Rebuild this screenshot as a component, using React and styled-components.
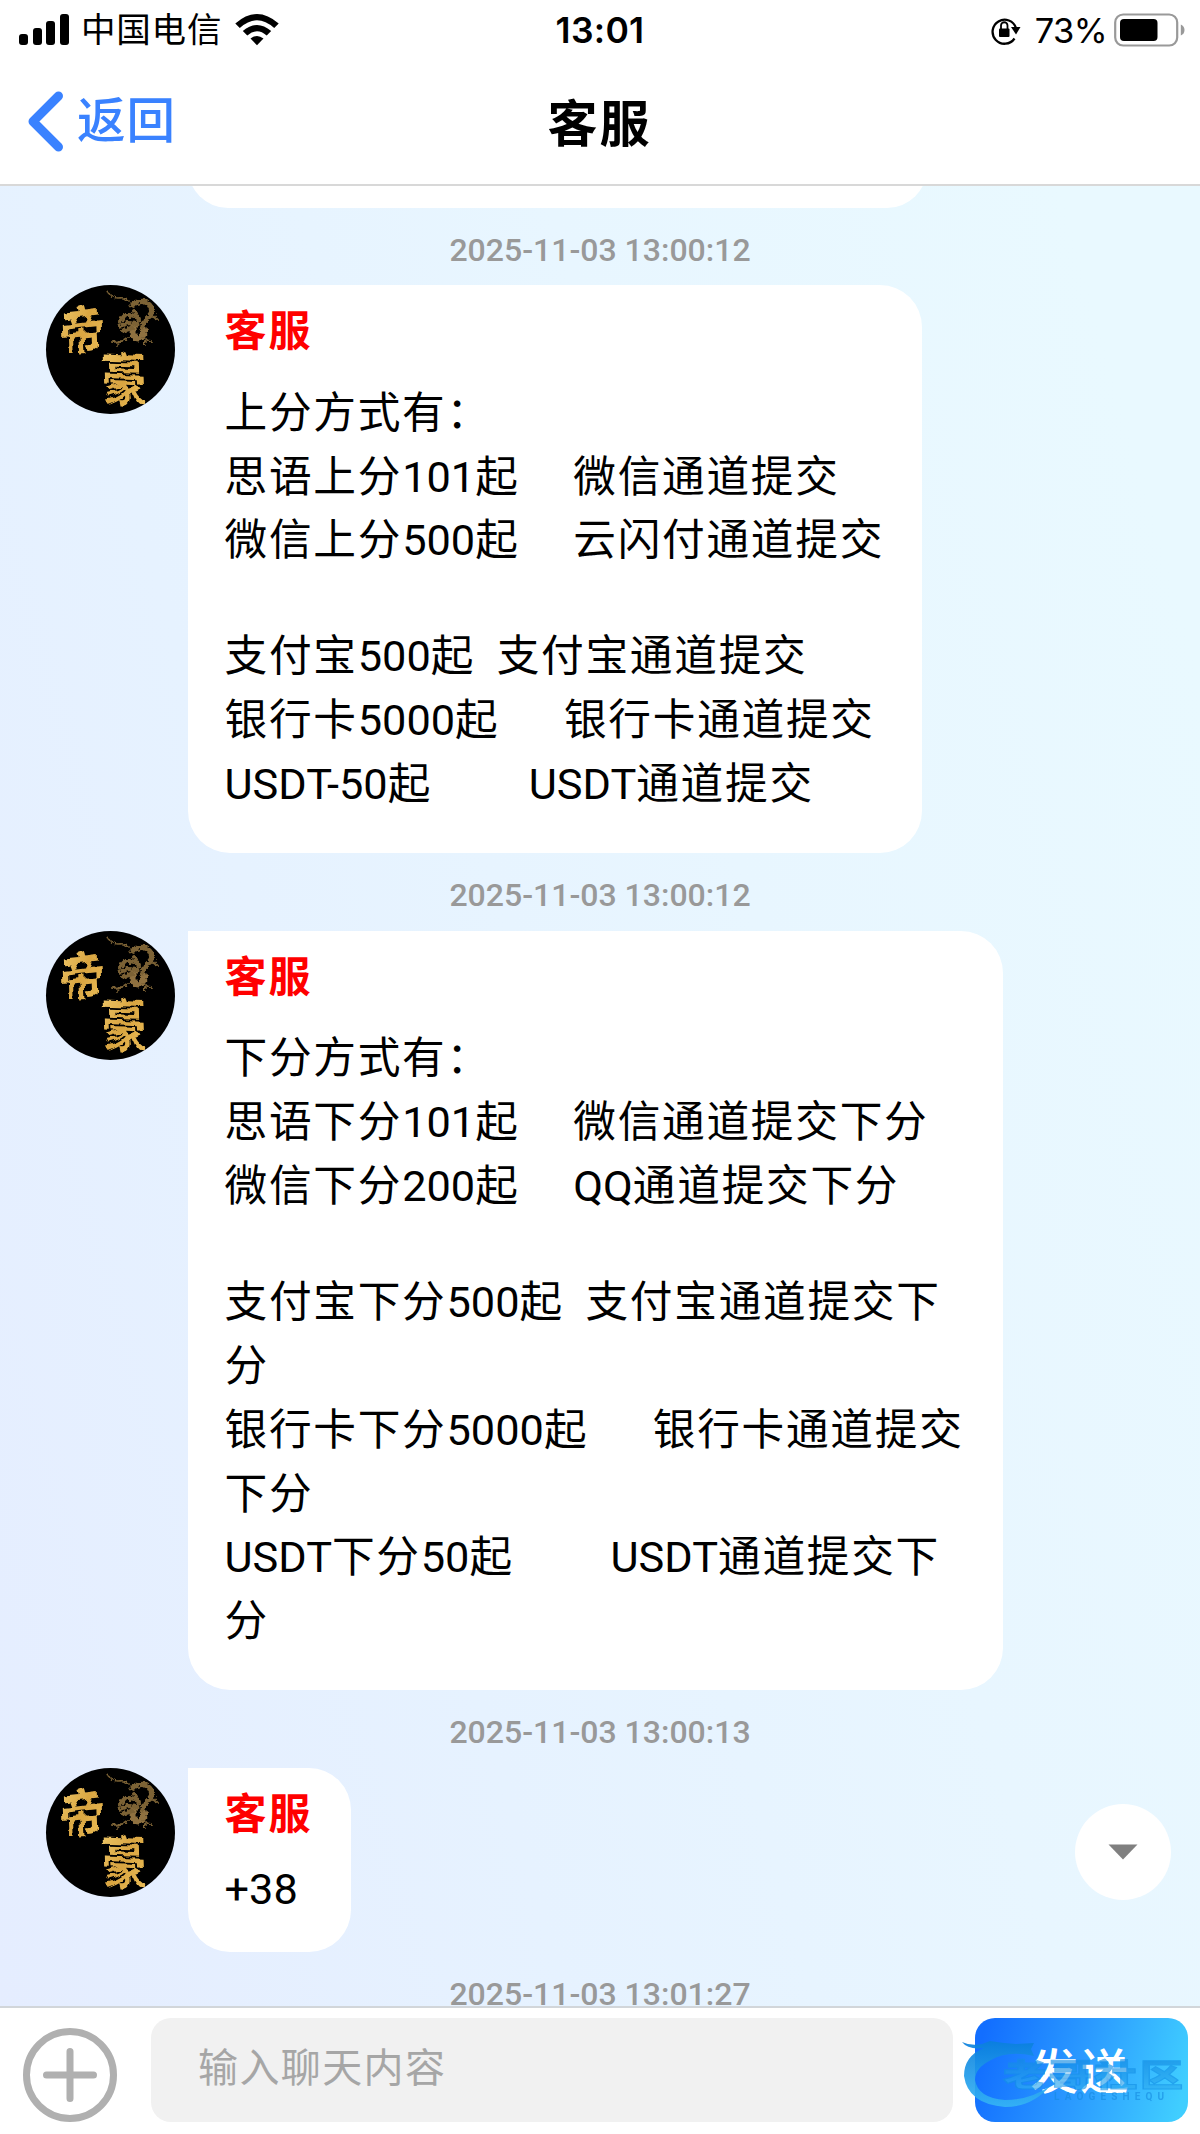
import React, { useState } from 'react';
import styled, { createGlobalStyle } from 'styled-components';

const GlobalStyle = createGlobalStyle`
    * { box-sizing: border-box; }

    body {
        margin: 0;
        background: #ffffff;
        font-family: Roboto, "Noto Sans CJK SC", sans-serif;
        color: #000000;
    }
`;

const Screen = styled.div`
    display: flex;
    flex-direction: column;
    width: 1200px;
    height: 2134px;
    overflow: hidden;
`;

const StatusBar = styled.div`
    display: flex;
    align-items: center;
    justify-content: space-between;
    height: 60px;
    padding: 0 15px 0 19px;
    flex: none;
`;

const StatusGroup = styled.div`
    display: flex;
    align-items: center;
    flex: 1;
    justify-content: ${props => props.$end ? 'flex-end' : 'flex-start'};
`;

const Carrier = styled.span`
    margin: 0 13px 0 10px;
    font-size: 34.5px;
    line-height: 62px;
    letter-spacing: 0.8px;
`;

const Clock = styled.span`
    margin-right: 4px;
    font-family: Inter, sans-serif;
    font-size: 35.5px;
    font-weight: 600;
    line-height: 65px;
    letter-spacing: 0.3px;
`;

const Percent = styled.span`
    margin: 0 7px 0 14px;
    font-family: Inter, sans-serif;
    font-size: 34.5px;
    line-height: 63px;
    letter-spacing: -0.6px;
`;

const NavBar = styled.header`
    display: grid;
    grid-template-columns: 1fr auto 1fr;
    align-items: center;
    height: 126px;
    flex: none;
    padding: 0 28px;
    border-bottom: 2px solid #d8d8d8;
`;

const BackButton = styled.button`
    display: flex;
    align-items: center;
    gap: 13px;
    padding: 0;
    border: none;
    background: none;
    color: #3a82ff;
    font-family: inherit;
    font-size: 48.5px;
    font-weight: 500;
    line-height: 64px;
    letter-spacing: 1px;
`;

const Title = styled.h1`
    margin: 0 1px 0 0;
    padding-top: 6px;
    font-size: 50px;
    line-height: 60px;
    letter-spacing: 2px;
    font-weight: 700;
`;

const Chat = styled.main`
    position: relative;
    display: flex;
    flex-direction: column;
    flex: none;
    height: 1820px;
    overflow: hidden;
    background: linear-gradient(74deg, #e5edff 0%, #e6f2ff 33%, #e8f6ff 62%, #e9f9ff 92%);
`;

const PreviousBubble = styled.div`
    flex: none;
    width: 739px;
    height: 80px;
    margin: -58.5px 0 0 188px;
    border-radius: 0 42px 42px 42px;
    background: #ffffff;
`;

const Timestamp = styled.time`
    display: block;
    flex: none;
    height: 77.8px;
    font-size: 32px;
    font-weight: 500;
    line-height: 84px;
    text-align: center;
    color: #999999;
`;

const MessageRow = styled.article`
    display: flex;
    flex: none;
    align-items: flex-start;
    gap: 13px;
    padding-left: 46px;
`;

const Bubble = styled.div`
    max-width: 815px;
    padding: 0 38px 36px 36.5px;
    border-radius: 0 42px 42px 42px;
    background: #ffffff;
    font-size: 43.3px;
`;

const Sender = styled.div`
    height: 96.3px;
    padding-top: 15px;
    font-size: 42px;
    line-height: 64px;
    letter-spacing: 2px;
    font-weight: 700;
    color: #ff0000;
`;

const Line = styled.div`
    min-height: 52px;
    line-height: ${props => props.$latin ? '52px' : '63.9px'};
    white-space: pre-wrap;
`;

// Chinese runs are set slightly wider than digits and latin letters
const Han = styled.span`
    font-size: 42.67px;
    letter-spacing: 1.75px;
`;

const ScrollDown = styled.button`
    position: absolute;
    right: 29px;
    bottom: 106px;
    display: flex;
    align-items: center;
    justify-content: center;
    width: 96px;
    height: 96px;
    padding: 0;
    border: none;
    border-radius: 50%;
    background: #ffffff;
`;

const Composer = styled.footer`
    position: relative;
    display: flex;
    align-items: center;
    flex: none;
    height: 128px;
    padding: 0 12px 2px 23px;
    border-top: 2px solid #d2d6da;
    background: #ffffff;
`;

const AddButton = styled.button`
    display: flex;
    margin: 9px 34px 0 0;
    padding: 0;
    border: none;
    background: none;
`;

const Input = styled.input`
    width: 802px;
    height: 104px;
    padding: 0 47px 3px;
    border: none;
    outline: none;
    border-radius: 20px;
    background: #f1f1f1;
    font-family: inherit;
    font-size: 40px;
    letter-spacing: 1.4px;

    &::placeholder {
        color: #a6a6a6;
        opacity: 1;
    }
`;

const SendButton = styled.button`
    width: 213px;
    height: 104px;
    margin-left: 22px;
    padding: 0 2px 4px 0;
    border: none;
    border-radius: 20px;
    background: linear-gradient(105deg, #126eff 5%, #2b9bff 50%, #40ceff 95%);
    color: #ffffff;
    font-family: inherit;
    font-size: 48px;
    font-weight: 500;
    letter-spacing: 2px;
`;

const Watermark = styled.svg`
    position: absolute;
    right: 0;
    top: 24px;
    pointer-events: none;
`;

const AvatarImage = styled.svg`
    flex: none;
    overflow: visible;
`;

function SignalIcon() {
    return (
        <svg width="52" height="32" viewBox="0 0 52 32">
            <rect x="0" y="20" width="9" height="11" rx="3" />
            <rect x="14" y="14" width="9" height="17" rx="3" />
            <rect x="27" y="7" width="9" height="24" rx="3" />
            <rect x="41" y="0" width="9" height="31" rx="3" />
        </svg>
    );
}

function WifiIcon() {
    return (
        <svg width="44" height="32" viewBox="0 0 44 32">
            <path d="M0.3 9.5 Q22 -9.5 43.7 9.5 L39.2 14 Q22 -1.5 4.8 14 Z" />
            <path d="M7.8 17 Q22 5 36.2 17 L31.7 21.5 Q22 13 12.3 21.5 Z" />
            <path d="M15.5 24.6 Q22 19.5 28.5 24.6 L22 31.2 Z" />
        </svg>
    );
}

function RotationLockIcon() {
    return (
        <svg width="31" height="30" viewBox="0 0 31 30">
            <path d="M24.5 23.5 A12 12 0 1 1 26 13" fill="none" stroke="#000" strokeWidth="2.3" />
            <path d="M21 12 H30.5 L26 19.5 Z" />
            <rect x="9" y="13.5" width="10.5" height="8.5" rx="1" />
            <path d="M11 14 V10.5 A3.2 3.2 0 0 1 17.5 10.5 V14" fill="none" stroke="#000" strokeWidth="1.8" />
        </svg>
    );
}

function BatteryIcon() {
    return (
        <svg width="71" height="34" viewBox="0 0 71 34">
            <rect x="1.2" y="1.5" width="62" height="31" rx="8" fill="none" stroke="#999" strokeWidth="2.2" />
            <rect x="6" y="6" width="37.5" height="22" rx="4" />
            <path d="M66.8 11.5 Q70.5 13 70.5 17 Q70.5 21 66.8 22.5 Z" fill="#999" />
        </svg>
    );
}

function Avatar() {
    return (
        <AvatarImage width="129" height="129" viewBox="0 0 129 129" fontFamily='"Noto Sans CJK SC", sans-serif' fontWeight="700">
            <defs>
                <linearGradient id="gold" x1="0" y1="0" x2="1" y2="1">
                    <stop offset="0" stopColor="#f3cf72" />
                    <stop offset="0.5" stopColor="#d9a541" />
                    <stop offset="1" stopColor="#efc25c" />
                </linearGradient>
                {/* uneven edges of a dry brush */}
                <filter id="brush" x="-10%" y="-10%" width="120%" height="120%">
                    <feTurbulence type="fractalNoise" baseFrequency="0.07" numOctaves="2" seed="4" result="noise" />
                    <feDisplacementMap in="SourceGraphic" in2="noise" scale="8" xChannelSelector="R" yChannelSelector="G" />
                </filter>
                <filter id="grain" x="-10%" y="-10%" width="120%" height="120%">
                    <feTurbulence type="fractalNoise" baseFrequency="0.3" numOctaves="2" seed="9" result="noise" />
                    <feDisplacementMap in="SourceGraphic" in2="noise" scale="6" xChannelSelector="R" yChannelSelector="G" />
                </filter>
            </defs>
            <circle cx="64.5" cy="64.5" r="64.5" fill="#000" />
            <g fill="none" stroke="#7c6235" strokeLinecap="round" strokeLinejoin="round" filter="url(#grain)">
                <path d="M61 6 Q65 13 72 13 Q80 12 84 17" strokeWidth="1.5" />
                <path d="M86 20 Q98 12 105 22 Q108 30 100 34 Q95 41 98 48" strokeWidth="5" />
                <path d="M98 46 Q96 55 90 53 Q84 50 88 42" strokeWidth="6" stroke="#8f7140" />
                <path d="M74 36 L80 29 L88 31 M73 41 L82 38 L92 39 M77 46 L86 43 M88 26 L93 35" strokeWidth="4" />
                <path d="M82 52 L76 56 L67 57 M76 56 L71 60 M97 52 L105 57 M100 53 L98 60" strokeWidth="2" />
                <path d="M101 31 L107 31 L111 35 M107 31 L108 26" strokeWidth="2" />
            </g>
            <g fill="url(#gold)" filter="url(#brush)">
                <text transform="translate(15 68) rotate(-6) skewX(-4) scale(0.95 1.15)" fontSize="46">帝</text>
                <text transform="translate(57 115) rotate(2) skewX(4) scale(0.92 1.2)" fontSize="48">豪</text>
            </g>
        </AvatarImage>
    );
}

function RichLine({ text }) {
    let parts = text.split(/([\u4e00-\u9fff：]+)/).filter(Boolean);
    return (
        <Line $latin={!/[\u4e00-\u9fff]/.test(text)}>
            {parts.map((part, i) => /[\u4e00-\u9fff]/.test(part) ? <Han key={i}>{part}</Han> : part)}
        </Line>
    );
}

const messages = [
    {
        time: '2025-11-03 13:00:12',
        lines: [
            '上分方式有：',
            '思语上分101起     微信通道提交',
            '微信上分500起     云闪付通道提交',
            '',
            '支付宝500起  支付宝通道提交',
            '银行卡5000起      银行卡通道提交',
            'USDT-50起         USDT通道提交',
        ],
    },
    {
        time: '2025-11-03 13:00:12',
        lines: [
            '下分方式有：',
            '思语下分101起     微信通道提交下分',
            '微信下分200起     QQ通道提交下分',
            '',
            '支付宝下分500起  支付宝通道提交下分',
            '银行卡下分5000起      银行卡通道提交下分',
            'USDT下分50起         USDT通道提交下分',
        ],
    },
    {
        time: '2025-11-03 13:00:13',
        lines: ['+38'],
    },
];

function Message({ message }) {
    return (
        <>
            <Timestamp>{message.time}</Timestamp>
            <MessageRow>
                <Avatar />
                <Bubble>
                    <Sender>客服</Sender>
                    {message.lines.map((line, i) => <RichLine key={i} text={line} />)}
                </Bubble>
            </MessageRow>
        </>
    );
}

export default function App() {
    let [draft, setDraft] = useState('');

    return (
        <Screen>
            <GlobalStyle />
            <StatusBar>
                <StatusGroup>
                    <SignalIcon />
                    <Carrier>中国电信</Carrier>
                    <WifiIcon />
                </StatusGroup>
                <Clock>13:01</Clock>
                <StatusGroup $end>
                    <RotationLockIcon />
                    <Percent>73%</Percent>
                    <BatteryIcon />
                </StatusGroup>
            </StatusBar>
            <NavBar>
                <BackButton>
                    <svg width="36" height="62" viewBox="0 0 36 62">
                        <path d="M30.5 5 L5 30.5 L30.5 56" fill="none" stroke="#3a82ff" strokeWidth="9" strokeLinecap="round" strokeLinejoin="round" />
                    </svg>
                    返回
                </BackButton>
                <Title>客服</Title>
            </NavBar>
            <Chat>
                <PreviousBubble />
                {messages.map((message, i) => <Message key={i} message={message} />)}
                <Timestamp>2025-11-03 13:01:27</Timestamp>
                <ScrollDown title="回到底部">
                    <svg width="30" height="16" viewBox="0 0 30 16">
                        <path d="M0.5 0.5 H29.5 L15 15.5 Z" fill="#808080" />
                    </svg>
                </ScrollDown>
            </Chat>
            <Composer>
                <AddButton>
                    <svg width="94" height="94" viewBox="0 0 94 94" fill="none" stroke="#b0b0b0" strokeWidth="7" strokeLinecap="round">
                        <circle cx="47" cy="47" r="43.5" />
                        <path d="M47 23.5 V70.5 M23.5 47 H70.5" />
                    </svg>
                </AddButton>
                <Input placeholder="输入聊天内容" value={draft} onChange={event => setDraft(event.target.value)} />
                <SendButton>发送</SendButton>
                <Watermark width="240" height="86" viewBox="0 0 240 86">
                    <defs>
                        <linearGradient id="mark" x1="0" y1="0" x2="0" y2="1">
                            <stop offset="0" stopColor="#0a7fdc" />
                            <stop offset="1" stopColor="#35b4f5" />
                        </linearGradient>
                    </defs>
                    <path d="M2 10 Q10 14 22 12 L30 9 L44 11 L56 12 L74 11 L71 17 L74 24 Q48 18 31 28 Q15 36 15 48 Q18 66 45 68 Q70 68 90 54 Q72 75 45 75 Q8 72 4 44 Q4 24 24 16 Q8 18 2 10 Z" fill="url(#mark)" opacity="0.92" />
                    <text transform="translate(43 54) scale(1 0.72)" fontFamily='"Noto Sans CJK SC", sans-serif' fontSize="43" fontWeight="900" fill="url(#mark)" stroke="#1490e6" strokeWidth="1.5" opacity="0.65" textLength="180">老哥社区</text>
                    <text x="94" y="68" fontFamily="Roboto, sans-serif" fontSize="10" fontWeight="700" fill="#168ae0" opacity="0.6" textLength="110">LAOGESHEQU</text>
                </Watermark>
            </Composer>
        </Screen>
    );
}
